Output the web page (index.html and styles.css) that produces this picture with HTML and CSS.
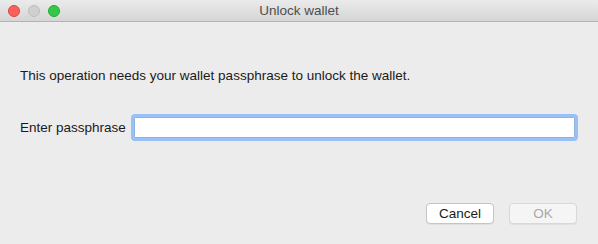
FILE: index.html
```html
<!DOCTYPE html>
<html lang="en">
<head>
  <meta charset="UTF-8">
  <title>Unlock wallet</title>
  <link rel="stylesheet" href="styles.css">
</head>
<body>

  <div class="window">
    <div class="titlebar">
      <div class="lights">
        <span class="light red"></span>
        <span class="light grey"></span>
        <span class="light green"></span>
      </div>
      <div class="title">Unlock wallet</div>
    </div>

    <div class="content">
      <p class="message">This operation needs your wallet passphrase to unlock the wallet.</p>

      <div class="field">
        <label for="pass">Enter passphrase</label>
        <input type="password" id="pass" class="pass-input">
      </div>

      <div class="buttons">
        <button class="btn">Cancel</button>
        <button class="btn disabled" disabled>OK</button>
      </div>
    </div>
  </div>

</body>
</html>
```

FILE: styles.css
```css
body {
  margin: 0;
  font-family: "Liberation Sans", Arial, sans-serif;
  font-size: 13.5px;
  color: #1a1a1a;
  background-color: #ececec;
}

.window {
  width: 598px;
  height: 244px;
  display: flex;
  flex-direction: column;
}

.titlebar {
  position: relative;
  height: 21px;
  background: linear-gradient(#ebebeb, #d5d5d5);
  border-bottom: 1px solid #b3b3b3;
  display: flex;
  align-items: center;
  justify-content: center;
}

.lights {
  position: absolute;
  left: 8px;
  top: 5px;
  display: flex;
  gap: 8px;
}

.light {
  width: 12px;
  height: 12px;
  border-radius: 50%;
  box-sizing: border-box;
}

.red {
  background-color: #fc605c;
  border: 1px solid #e0443e;
}

.grey {
  background-color: #d0d0d0;
  border: 1px solid #bcbcbc;
}

.green {
  background-color: #34c84a;
  border: 1px solid #1dad2b;
}

.title {
  color: #4d4d4d;
  font-size: 13.5px;
}

.content {
  flex: 1;
  display: flex;
  flex-direction: column;
  padding: 46px 21px 20px 20px;
}

.message {
  margin: 0;
  line-height: 16px;
}

.field {
  display: flex;
  align-items: center;
  gap: 8px;
  margin-top: 33px;
}

.pass-input {
  flex: 1;
  height: 21px;
  box-sizing: border-box;
  margin: 0 2px 0 0;
  border: 1px solid #8fb2e0;
  background: #fff;
  outline: 3px solid #97c1f7;
  border-radius: 1px;
  padding: 0 3px;
}

.buttons {
  margin-top: auto;
  display: flex;
  justify-content: flex-end;
  gap: 15px;
}

.btn {
  width: 68px;
  height: 21px;
  font-family: inherit;
  font-size: 13.5px;
  color: #1a1a1a;
  background: #fff;
  border: 1px solid #c5c5c5;
  border-radius: 4px;
  box-shadow: 0 1px 0 rgba(0,0,0,0.05);
  padding: 0;
}

.btn.disabled {
  color: #a8a8a8;
  background: #f5f5f5;
  border-color: #d8d8d8;
}
```
